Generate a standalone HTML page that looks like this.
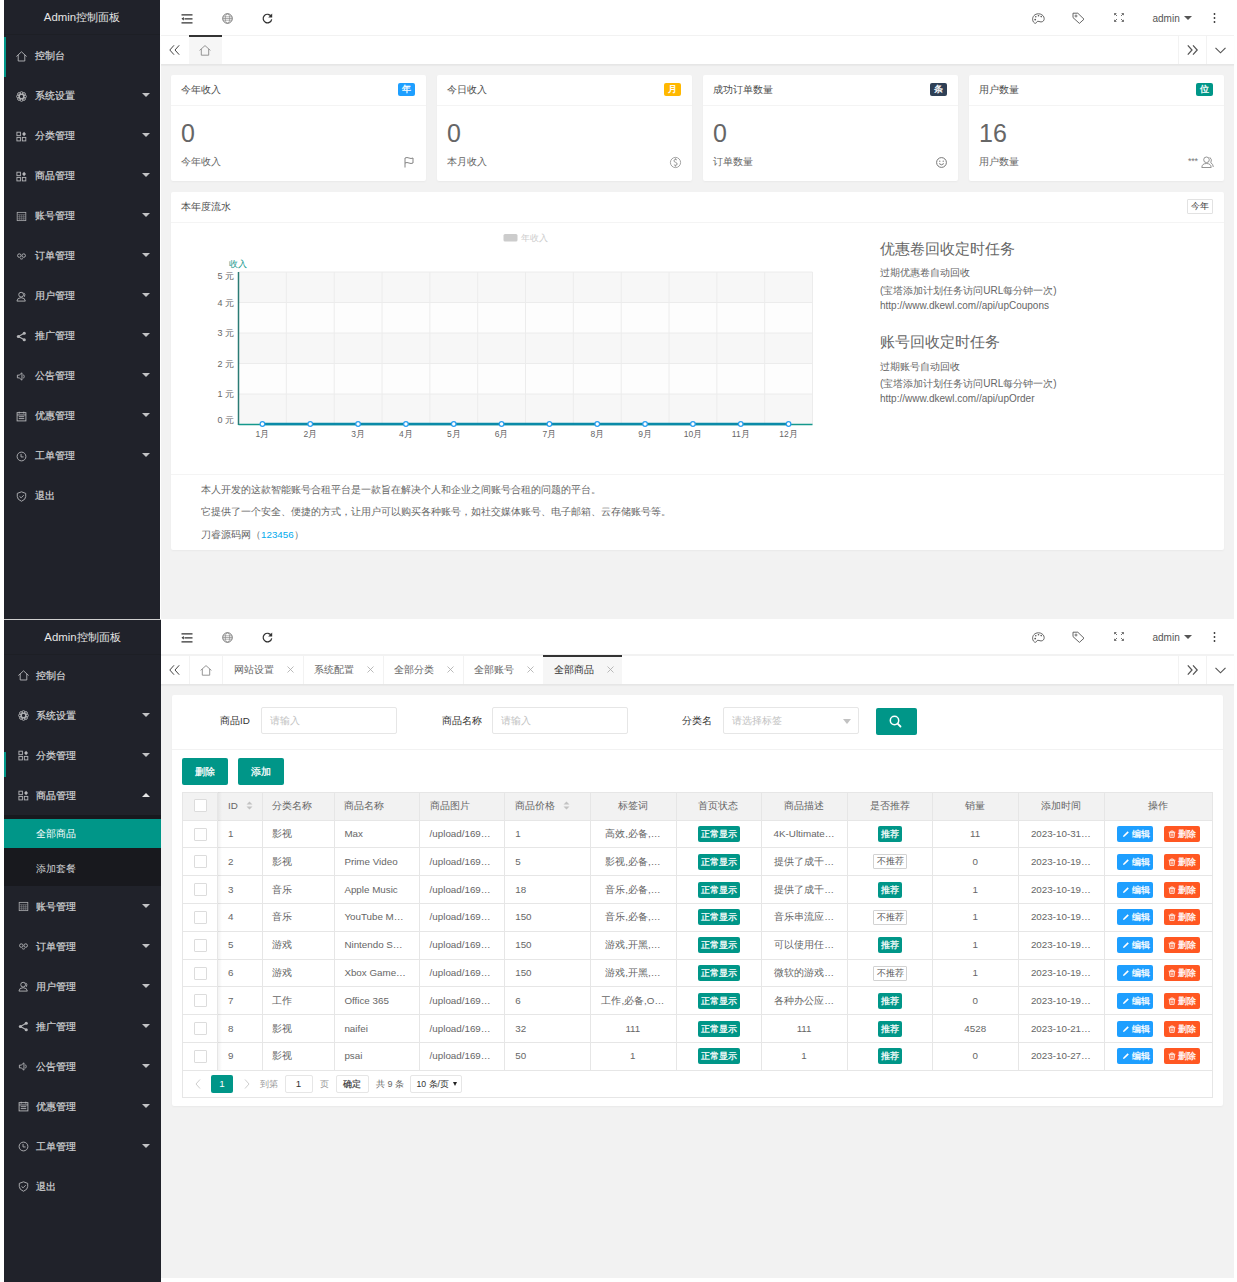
<!DOCTYPE html><html><head><meta charset="utf-8"><style>
*{box-sizing:border-box;margin:0;padding:0}
html,body{width:1237px;height:1282px;overflow:hidden;background:#fff;font-family:"Liberation Sans",sans-serif;color:#333}
.a{position:absolute}
.side{position:absolute;background:#20222a;overflow:hidden}
.logo{position:absolute;left:0;top:0;width:100%;height:35px;text-align:center;line-height:35px;font-size:11.4px;color:#e6e6e6;border-bottom:1px solid #1d1f25}
.mi{position:absolute;left:0;width:100%;height:40px;font-size:10px;color:#d2d3d5;-webkit-text-stroke:0.2px #d2d3d5}
.mi .tx{position:absolute;left:32px;top:1px;line-height:40px;white-space:nowrap}
.mi svg{position:absolute;left:13.5px;top:15px;width:11px;height:11px}
.s1 .mi .tx{left:31px;top:1px}
.s1 .mi svg{top:15.5px;left:12px}
.ar{position:absolute;left:138px;top:18px;width:0;height:0;border-left:4px solid transparent;border-right:4px solid transparent;border-top:4.5px solid #c2c3c5}
.ar.up{border-top:none;border-bottom:4.5px solid #e6e6e6;top:17.5px}
.hdr{position:absolute;background:#fff}
.grey{position:absolute;background:#f2f2f2}
.card{position:absolute;background:#fff;border-radius:2px;box-shadow:0 1px 2px rgba(0,0,0,.04)}
.ch{position:absolute;left:0;top:0;width:100%;height:31px;border-bottom:1px solid #f4f4f4;font-size:9.8px;line-height:30px;padding-left:10px;color:#4d4d4d}
.badge{position:absolute;right:11px;top:8px;height:13px;width:17px;border-radius:2px;color:#fff;font-size:8.5px;line-height:13px;text-align:center;-webkit-text-stroke:0.3px #fff}
.big{position:absolute;left:10px;top:43px;font-size:25px;color:#666;line-height:30px}
.sub{position:absolute;left:10px;top:80px;font-size:9.8px;color:#666;line-height:14px}
svg{position:absolute;overflow:visible}
.t{position:absolute;white-space:nowrap}
.tb{position:absolute;font-size:9.8px;color:#666}
.cell{position:absolute;font-size:9.8px;color:#666;white-space:nowrap;line-height:14px}
.tag{position:absolute;height:16px;line-height:16px;font-size:8.6px;color:#fff;text-align:center;border-radius:2px;-webkit-text-stroke:0.25px #fff}
</style></head><body>
<div class="grey" style="left:161px;top:0;width:1073px;height:619px"></div>
<div class="side s1" style="left:4px;top:0px;width:156px;height:619px">
<div class="logo">Admin控制面板</div>
<div class="a" style="left:0;top:37px;width:2px;height:40px;background:#009688"></div>
<div class="mi" style="top:35px"><svg viewBox="0 0 12 12" width="11" height="11"><path d="M0.4 6 L6 0.9 L11.6 6" fill="none" stroke="#b4b5b8" stroke-width="1"/><path d="M2.4 4.3 V10.9 H9.6 V4.3" fill="none" stroke="#b4b5b8" stroke-width="1"/></svg><span class="tx">控制台</span></div>
<div class="mi" style="top:75px"><svg viewBox="0 0 12 12" width="11" height="11"><circle cx="9.80" cy="6.00" r="1.55" fill="none" stroke="#b0b1b4" stroke-width="1"/><circle cx="8.69" cy="8.69" r="1.55" fill="none" stroke="#b0b1b4" stroke-width="1"/><circle cx="6.00" cy="9.80" r="1.55" fill="none" stroke="#b0b1b4" stroke-width="1"/><circle cx="3.31" cy="8.69" r="1.55" fill="none" stroke="#b0b1b4" stroke-width="1"/><circle cx="2.20" cy="6.00" r="1.55" fill="none" stroke="#b0b1b4" stroke-width="1"/><circle cx="3.31" cy="3.31" r="1.55" fill="none" stroke="#b0b1b4" stroke-width="1"/><circle cx="6.00" cy="2.20" r="1.55" fill="none" stroke="#b0b1b4" stroke-width="1"/><circle cx="8.69" cy="3.31" r="1.55" fill="none" stroke="#b0b1b4" stroke-width="1"/><circle cx="6" cy="6" r="2.6" fill="none" stroke="#b0b1b4" stroke-width="1.6"/></svg><span class="tx">系统设置</span><i class="ar"></i></div>
<div class="mi" style="top:115px"><svg viewBox="0 0 12 12" width="11" height="11"><rect x="1" y="1.3" width="3.8" height="3.8" fill="none" stroke="#b4b5b8" stroke-width="1"/><rect x="1" y="7" width="3.8" height="3.8" fill="none" stroke="#b4b5b8" stroke-width="1"/><rect x="6.9" y="7" width="3.8" height="3.8" fill="none" stroke="#b4b5b8" stroke-width="1"/><path d="M8.8 0.8 L10.9 3.2 L8.8 5.6 L6.7 3.2Z" fill="#b4b5b8"/></svg><span class="tx">分类管理</span><i class="ar"></i></div>
<div class="mi" style="top:155px"><svg viewBox="0 0 12 12" width="11" height="11"><rect x="1" y="1.3" width="3.8" height="3.8" fill="none" stroke="#b4b5b8" stroke-width="1"/><rect x="1" y="7" width="3.8" height="3.8" fill="none" stroke="#b4b5b8" stroke-width="1"/><rect x="6.9" y="7" width="3.8" height="3.8" fill="none" stroke="#b4b5b8" stroke-width="1"/><path d="M8.8 0.8 L10.9 3.2 L8.8 5.6 L6.7 3.2Z" fill="#b4b5b8"/></svg><span class="tx">商品管理</span><i class="ar"></i></div>
<div class="mi" style="top:195px"><svg viewBox="0 0 12 12" width="11" height="11"><rect x="1.3" y="1.5" width="9.4" height="9" fill="none" stroke="#a9aaad" stroke-width="0.9"/><path d="M1.3 4 H10.7 M1.3 6.3 H10.7 M1.3 8.5 H10.7 M4 4 V10.5 M6.2 4 V10.5 M8.4 4 V10.5" fill="none" stroke="#8c8d91" stroke-width="0.6"/></svg><span class="tx">账号管理</span><i class="ar"></i></div>
<div class="mi" style="top:235px"><svg viewBox="0 0 12 12" width="11" height="11"><circle cx="3.6" cy="5" r="1.9" fill="none" stroke="#b4b5b8" stroke-width="1"/><circle cx="8.4" cy="5" r="1.9" fill="none" stroke="#b4b5b8" stroke-width="1"/><path d="M4.5 8.3 Q6 9.3 7.5 8.3" fill="none" stroke="#b4b5b8" stroke-width="1"/></svg><span class="tx">订单管理</span><i class="ar"></i></div>
<div class="mi" style="top:275px"><svg viewBox="0 0 12 12" width="11" height="11"><circle cx="5.6" cy="4" r="2.6" fill="none" stroke="#b4b5b8" stroke-width="1"/><path d="M1 11 Q1.3 7.3 5.6 7.3 Q9.9 7.3 10.2 11 Z" fill="none" stroke="#b4b5b8" stroke-width="1"/><path d="M8.5 2 Q10.5 3.5 9.2 6.3" fill="none" stroke="#b4b5b8" stroke-width="1"/></svg><span class="tx">用户管理</span><i class="ar"></i></div>
<div class="mi" style="top:315px"><svg viewBox="0 0 12 12" width="11" height="11"><circle cx="2.6" cy="6" r="1.7" fill="#b4b5b8"/><circle cx="9" cy="2.5" r="1.7" fill="#b4b5b8"/><circle cx="9" cy="9.5" r="1.7" fill="#b4b5b8"/><path d="M2.6 6 L9 2.5 M2.6 6 L9 9.5" stroke="#b4b5b8" stroke-width="1.2"/></svg><span class="tx">推广管理</span><i class="ar"></i></div>
<div class="mi" style="top:355px"><svg viewBox="0 0 12 12" width="11" height="11"><path d="M1.5 4.5 H3.5 L6.5 2 V10 L3.5 7.5 H1.5 Z" fill="none" stroke="#b4b5b8" stroke-width="1"/><path d="M8.3 4 Q9.6 6 8.3 8" fill="none" stroke="#b4b5b8" stroke-width="1"/></svg><span class="tx">公告管理</span><i class="ar"></i></div>
<div class="mi" style="top:395px"><svg viewBox="0 0 12 12" width="11" height="11"><rect x="1.2" y="1.8" width="9.6" height="9" fill="none" stroke="#b4b5b8" stroke-width="1"/><path d="M3.5 0.8 V2.8 M8.5 0.8 V2.8 M1.2 4.3 H10.8 M3 6.2 H9 M3 8.3 H9" fill="none" stroke="#b4b5b8" stroke-width="1"/></svg><span class="tx">优惠管理</span><i class="ar"></i></div>
<div class="mi" style="top:435px"><svg viewBox="0 0 12 12" width="11" height="11"><circle cx="6" cy="6" r="4.8" fill="none" stroke="#b4b5b8" stroke-width="1"/><path d="M5.5 3.2 V6.5 H8.3" fill="none" stroke="#b4b5b8" stroke-width="1"/></svg><span class="tx">工单管理</span><i class="ar"></i></div>
<div class="mi" style="top:475px"><svg viewBox="0 0 12 12" width="11" height="11"><path d="M6 0.9 L10.6 2.6 V6 Q10.6 9.4 6 11.2 Q1.4 9.4 1.4 6 V2.6 Z" fill="none" stroke="#b4b5b8" stroke-width="1"/><path d="M3.8 5.8 L5.6 7.4 L8.4 4.6" fill="none" stroke="#b4b5b8" stroke-width="1"/></svg><span class="tx">退出</span></div>
</div>
<div class="hdr" style="left:161px;top:0px;width:1073px;height:35px"></div>
<svg style="left:181px;top:13.9px" width="12" height="10" viewBox="0 0 12 10"><path d="M0.5 0.8 H11.5 M3.5 4.8 H11.5 M0.5 8.8 H11.5" stroke="#333" stroke-width="1.15"/><path d="M0.5 4.8 L2.8 3.1 V6.5Z" fill="#333"/></svg>
<svg style="left:221.5px;top:13px" width="11" height="11" viewBox="0 0 11 11"><circle cx="5.5" cy="5.5" r="4.8" fill="none" stroke="#666" stroke-width="0.9"/><path d="M1.2 3.8 H9.8 M0.8 5.5 H10.2 M1.2 7.2 H9.8" fill="none" stroke="#777" stroke-width="0.6"/><ellipse cx="5.5" cy="5.5" rx="2.2" ry="4.6" fill="none" stroke="#777" stroke-width="0.6"/></svg>
<svg style="left:261.5px;top:13px" width="11" height="11" viewBox="0 0 11 11"><path d="M9.3 3.6 A4.3 4.3 0 1 0 9.7 6.3" fill="none" stroke="#333" stroke-width="1.2"/><path d="M10.2 0.6 V4.6 H6.2Z" fill="#333"/></svg>
<svg style="left:1031.5px;top:13px" width="13" height="11" viewBox="0 0 13 11"><path d="M6.5 0.8 C2.5 0.8 0.6 3.6 0.6 6.2 C0.6 8.6 2.2 10.3 3.4 10.3 C4.8 10.3 4.4 8.3 5.8 8.3 C7.6 8.3 8.4 9.4 10.3 8.7 C12.2 8 12.6 5.6 11.8 3.9 C10.9 2 9 0.8 6.5 0.8Z" fill="none" stroke="#555" stroke-width="0.9"/><circle cx="3.2" cy="6.6" r="0.9" fill="#555"/><circle cx="3.8" cy="3.8" r="0.8" fill="#555"/><circle cx="6.5" cy="2.7" r="0.8" fill="#555"/><circle cx="9.2" cy="3.6" r="0.8" fill="#555"/></svg>
<svg style="left:1071.5px;top:12px" width="13" height="12" viewBox="0 0 13 12"><path d="M1 1.2 H5.8 L12 7.2 L7.4 11.4 L1 5.6Z" fill="none" stroke="#555" stroke-width="0.9" stroke-linejoin="round"/><circle cx="4" cy="4" r="1" fill="none" stroke="#555" stroke-width="0.8"/></svg>
<svg style="left:1113.5px;top:13px" width="10" height="9" viewBox="0 0 10 9"><path d="M0.5 0.5 L3 3 M0.5 0.5 H2.4 M0.5 0.5 V2.2 M9.5 0.5 L7 3 M9.5 0.5 H7.6 M9.5 0.5 V2.2 M0.5 8.5 L3 6 M0.5 8.5 H2.4 M0.5 8.5 V6.8 M9.5 8.5 L7 6 M9.5 8.5 H7.6 M9.5 8.5 V6.8" fill="none" stroke="#666" stroke-width="0.9"/></svg>
<div class="t" style="left:1152.5px;top:12.8px;font-size:10px;color:#555;line-height:12px">admin</div>
<div class="a" style="left:1184px;top:16px;width:0;height:0;border-left:4px solid transparent;border-right:4px solid transparent;border-top:4.5px solid #555"></div>
<svg style="left:1213px;top:13px" width="3" height="10" viewBox="0 0 3 10"><circle cx="1.5" cy="1" r="0.9" fill="#333"/><circle cx="1.5" cy="5" r="0.9" fill="#333"/><circle cx="1.5" cy="9" r="0.9" fill="#333"/></svg>
<div class="hdr" style="left:161px;top:35px;width:1073px;height:29.5px;border-top:1px solid #f2f2f2;border-bottom:1px solid #e6e6e6;box-shadow:0 1px 1px rgba(0,0,0,.03)"></div>
<svg style="left:169px;top:45px" width="11" height="10" viewBox="0 0 11 10"><path d="M5 0.3 L0.8 5 L5 9.7 M10.2 0.3 L6 5 L10.2 9.7" fill="none" stroke="#444" stroke-width="1"/></svg>
<div class="a" style="left:188.5px;top:35px;width:1px;height:29px;background:#f2f2f2"></div>
<div class="a" style="left:1178px;top:35px;width:1px;height:29px;background:#f2f2f2"></div>
<div class="a" style="left:1206px;top:35px;width:1px;height:29px;background:#f2f2f2"></div>
<svg style="left:1187px;top:45px" width="11" height="10" viewBox="0 0 11 10"><path d="M0.8 0.3 L5 5 L0.8 9.7 M6 0.3 L10.2 5 L6 9.7" fill="none" stroke="#555" stroke-width="1.25"/></svg>
<svg style="left:1215px;top:47px" width="11" height="7" viewBox="0 0 11 7"><path d="M0.5 0.8 L5.5 5.8 L10.5 0.8" fill="none" stroke="#555" stroke-width="1.15"/></svg>
<div class="a" style="left:188.5px;top:35px;width:33.5px;height:29px;background:#f6f6f6;border-top:2px solid #333"></div>
<svg style="left:199.25px;top:44.5px" width="12" height="11" viewBox="0 0 12 11"><path d="M0.6 5.4 L6 0.6 L11.4 5.4 M2.3 4 V10.2 H9.7 V4" fill="none" stroke="#8a8a8a" stroke-width="0.9"/></svg>
<div class="card" style="left:171px;top:75px;width:255px;height:106px">
<div class="ch">今年收入</div><div class="badge" style="background:#1e9fff">年</div>
<div class="big">0</div><div class="sub">今年收入</div>
</div>
<div class="card" style="left:437px;top:75px;width:255px;height:106px">
<div class="ch">今日收入</div><div class="badge" style="background:#ffb800">月</div>
<div class="big">0</div><div class="sub">本月收入</div>
</div>
<div class="card" style="left:703px;top:75px;width:255px;height:106px">
<div class="ch">成功订单数量</div><div class="badge" style="background:#2f4056">条</div>
<div class="big">0</div><div class="sub">订单数量</div>
</div>
<div class="card" style="left:969px;top:75px;width:255px;height:106px">
<div class="ch">用户数量</div><div class="badge" style="background:#009688">位</div>
<div class="big">16</div><div class="sub">用户数量</div>
</div>
<svg style="left:404px;top:156.5px" width="10" height="11" viewBox="0 0 10 11"><path d="M1 10.5 V1 Q3 0 5 1 Q7 2 9 1 V6 Q7 7 5 6 Q3 5 1 6" fill="none" stroke="#777" stroke-width="0.9"/></svg>
<svg style="left:670px;top:156.5px" width="11" height="11" viewBox="0 0 11 11"><circle cx="5.5" cy="5.5" r="5.1" fill="none" stroke="#999" stroke-width="0.9"/><path d="M7 3.3 Q6.5 2.5 5.5 2.5 Q4 2.5 4 3.8 Q4 4.9 5.5 5.3 Q7.1 5.7 7.1 7 Q7.1 8.3 5.5 8.3 Q4.4 8.3 3.9 7.5 M5.5 1.3 V2.5 M5.5 8.3 V9.6" fill="none" stroke="#888" stroke-width="0.9"/></svg>
<svg style="left:936px;top:156.5px" width="11" height="11" viewBox="0 0 11 11"><circle cx="5.5" cy="5.5" r="4.9" fill="none" stroke="#666" stroke-width="0.9"/><circle cx="3.8" cy="4.2" r="0.6" fill="#666"/><circle cx="7.2" cy="4.2" r="0.6" fill="#666"/><path d="M3.2 6.6 Q5.5 9 7.8 6.6" fill="none" stroke="#666" stroke-width="0.9"/></svg>
<div class="t" style="left:1188px;top:156px;font-size:9px;color:#777;line-height:10px;letter-spacing:-0.3px">***</div>
<svg style="left:1201px;top:156px" width="13" height="12" viewBox="0 0 13 12"><circle cx="5.5" cy="3.8" r="2.8" fill="none" stroke="#888" stroke-width="0.9"/><path d="M0.8 11.5 Q1 7.5 5.5 7.5 Q10 7.5 10.2 11.5Z" fill="none" stroke="#888" stroke-width="0.9"/><path d="M8.8 1.3 Q11.5 3.5 9.8 6.8 Q12.2 8 12.3 11" fill="none" stroke="#888" stroke-width="0.9"/></svg>
<div class="card" style="left:171px;top:192px;width:1053px;height:358px">
<div class="ch">本年度流水</div>
<div class="a" style="left:1016px;top:7px;width:26px;height:15px;border:1px solid #e2e2e2;border-radius:1px;font-size:8.5px;line-height:13px;text-align:center;color:#333">今年</div>
<div class="a" style="left:0;top:282px;width:100%;height:1px;background:#f4f4f4"></div>
</div>
<svg style="left:0;top:0" width="1237" height="620" viewBox="0 0 1237 620"><rect x="238.5" y="272.0" width="574.0" height="30.5" fill="#f7f7f7"/><rect x="238.5" y="302.5" width="574.0" height="30.5" fill="#fdfdfd"/><rect x="238.5" y="333.0" width="574.0" height="30.5" fill="#f7f7f7"/><rect x="238.5" y="363.5" width="574.0" height="30.5" fill="#fdfdfd"/><rect x="238.5" y="394.0" width="574.0" height="30.5" fill="#f7f7f7"/><line x1="286.3333333333333" y1="272" x2="286.3333333333333" y2="424.5" stroke="#ececec" stroke-width="1"/><line x1="334.1666666666667" y1="272" x2="334.1666666666667" y2="424.5" stroke="#ececec" stroke-width="1"/><line x1="382.0" y1="272" x2="382.0" y2="424.5" stroke="#ececec" stroke-width="1"/><line x1="429.83333333333337" y1="272" x2="429.83333333333337" y2="424.5" stroke="#ececec" stroke-width="1"/><line x1="477.6666666666667" y1="272" x2="477.6666666666667" y2="424.5" stroke="#ececec" stroke-width="1"/><line x1="525.5" y1="272" x2="525.5" y2="424.5" stroke="#ececec" stroke-width="1"/><line x1="573.3333333333334" y1="272" x2="573.3333333333334" y2="424.5" stroke="#ececec" stroke-width="1"/><line x1="621.1666666666667" y1="272" x2="621.1666666666667" y2="424.5" stroke="#ececec" stroke-width="1"/><line x1="669.0" y1="272" x2="669.0" y2="424.5" stroke="#ececec" stroke-width="1"/><line x1="716.8333333333334" y1="272" x2="716.8333333333334" y2="424.5" stroke="#ececec" stroke-width="1"/><line x1="764.6666666666667" y1="272" x2="764.6666666666667" y2="424.5" stroke="#ececec" stroke-width="1"/><line x1="812.5" y1="272" x2="812.5" y2="424.5" stroke="#ececec" stroke-width="1"/><line x1="238.5" y1="272.0" x2="812.5" y2="272.0" stroke="#ececec" stroke-width="1"/><line x1="238.5" y1="302.5" x2="812.5" y2="302.5" stroke="#ececec" stroke-width="1"/><line x1="238.5" y1="333.0" x2="812.5" y2="333.0" stroke="#ececec" stroke-width="1"/><line x1="238.5" y1="363.5" x2="812.5" y2="363.5" stroke="#ececec" stroke-width="1"/><line x1="238.5" y1="394.0" x2="812.5" y2="394.0" stroke="#ececec" stroke-width="1"/><line x1="238.5" y1="272" x2="238.5" y2="425.0" stroke="#2a7b74" stroke-width="1.5"/><line x1="238.5" y1="424.5" x2="812.5" y2="424.5" stroke="#14988c" stroke-width="1.5"/><line x1="262.4166666666667" y1="424.0" x2="788.5833333333334" y2="424.0" stroke="#0b8aa8" stroke-width="2.4"/><circle cx="262.4166666666667" cy="424.0" r="2.3" fill="#fff" stroke="#2a9ff0" stroke-width="1.2"/><text x="262.4166666666667" y="436.5" font-size="8.5" fill="#666" text-anchor="middle" font-family="Liberation Sans">1月</text><circle cx="310.25" cy="424.0" r="2.3" fill="#fff" stroke="#2a9ff0" stroke-width="1.2"/><text x="310.25" y="436.5" font-size="8.5" fill="#666" text-anchor="middle" font-family="Liberation Sans">2月</text><circle cx="358.08333333333337" cy="424.0" r="2.3" fill="#fff" stroke="#2a9ff0" stroke-width="1.2"/><text x="358.08333333333337" y="436.5" font-size="8.5" fill="#666" text-anchor="middle" font-family="Liberation Sans">3月</text><circle cx="405.9166666666667" cy="424.0" r="2.3" fill="#fff" stroke="#2a9ff0" stroke-width="1.2"/><text x="405.9166666666667" y="436.5" font-size="8.5" fill="#666" text-anchor="middle" font-family="Liberation Sans">4月</text><circle cx="453.75" cy="424.0" r="2.3" fill="#fff" stroke="#2a9ff0" stroke-width="1.2"/><text x="453.75" y="436.5" font-size="8.5" fill="#666" text-anchor="middle" font-family="Liberation Sans">5月</text><circle cx="501.58333333333337" cy="424.0" r="2.3" fill="#fff" stroke="#2a9ff0" stroke-width="1.2"/><text x="501.58333333333337" y="436.5" font-size="8.5" fill="#666" text-anchor="middle" font-family="Liberation Sans">6月</text><circle cx="549.4166666666667" cy="424.0" r="2.3" fill="#fff" stroke="#2a9ff0" stroke-width="1.2"/><text x="549.4166666666667" y="436.5" font-size="8.5" fill="#666" text-anchor="middle" font-family="Liberation Sans">7月</text><circle cx="597.25" cy="424.0" r="2.3" fill="#fff" stroke="#2a9ff0" stroke-width="1.2"/><text x="597.25" y="436.5" font-size="8.5" fill="#666" text-anchor="middle" font-family="Liberation Sans">8月</text><circle cx="645.0833333333334" cy="424.0" r="2.3" fill="#fff" stroke="#2a9ff0" stroke-width="1.2"/><text x="645.0833333333334" y="436.5" font-size="8.5" fill="#666" text-anchor="middle" font-family="Liberation Sans">9月</text><circle cx="692.9166666666667" cy="424.0" r="2.3" fill="#fff" stroke="#2a9ff0" stroke-width="1.2"/><text x="692.9166666666667" y="436.5" font-size="8.5" fill="#666" text-anchor="middle" font-family="Liberation Sans">10月</text><circle cx="740.75" cy="424.0" r="2.3" fill="#fff" stroke="#2a9ff0" stroke-width="1.2"/><text x="740.75" y="436.5" font-size="8.5" fill="#666" text-anchor="middle" font-family="Liberation Sans">11月</text><circle cx="788.5833333333334" cy="424.0" r="2.3" fill="#fff" stroke="#2a9ff0" stroke-width="1.2"/><text x="788.5833333333334" y="436.5" font-size="8.5" fill="#666" text-anchor="middle" font-family="Liberation Sans">12月</text><text x="234" y="422.8" font-size="9" fill="#666" text-anchor="end" font-family="Liberation Sans">0 元</text><text x="234" y="397.3" font-size="9" fill="#666" text-anchor="end" font-family="Liberation Sans">1 元</text><text x="234" y="366.8" font-size="9" fill="#666" text-anchor="end" font-family="Liberation Sans">2 元</text><text x="234" y="336.3" font-size="9" fill="#666" text-anchor="end" font-family="Liberation Sans">3 元</text><text x="234" y="305.8" font-size="9" fill="#666" text-anchor="end" font-family="Liberation Sans">4 元</text><text x="234" y="279.3" font-size="9" fill="#666" text-anchor="end" font-family="Liberation Sans">5 元</text><text x="238" y="267" font-size="8.5" fill="#14988c" text-anchor="middle" font-family="Liberation Sans">收入</text><rect x="503.5" y="234" width="14" height="7.5" rx="1.5" fill="#ccc"/><text x="521" y="240.5" font-size="8.5" fill="#ccc" font-family="Liberation Sans">年收入</text></svg>
<div class="t" style="left:880px;top:239px;font-size:14.5px;color:#666;line-height:20px">优惠卷回收定时任务</div>
<div class="t" style="left:880px;top:266px;font-size:10px;color:#666;line-height:14px">过期优惠卷自动回收</div>
<div class="t" style="left:880px;top:284px;font-size:10px;color:#666;line-height:14px">(宝塔添加计划任务访问URL每分钟一次)</div>
<div class="t" style="left:880px;top:298.5px;font-size:10px;color:#666;line-height:14px">http://www.dkewl.com//api/upCoupons</div>
<div class="t" style="left:880px;top:332px;font-size:14.5px;color:#666;line-height:20px">账号回收定时任务</div>
<div class="t" style="left:880px;top:359.5px;font-size:10px;color:#666;line-height:14px">过期账号自动回收</div>
<div class="t" style="left:880px;top:377px;font-size:10px;color:#666;line-height:14px">(宝塔添加计划任务访问URL每分钟一次)</div>
<div class="t" style="left:880px;top:391.5px;font-size:10px;color:#666;line-height:14px">http://www.dkewl.com//api/upOrder</div>
<div class="t" style="left:201px;top:482.5px;font-size:9.8px;color:#666;line-height:14px">本人开发的这款智能账号合租平台是一款旨在解决个人和企业之间账号合租的问题的平台。</div>
<div class="t" style="left:201px;top:505px;font-size:9.8px;color:#666;line-height:14px">它提供了一个安全、便捷的方式，让用户可以购买各种账号，如社交媒体账号、电子邮箱、云存储账号等。</div>
<div class="t" style="left:201px;top:527.5px;font-size:9.8px;color:#666;line-height:14px">刀睿源码网（<span style="color:#01aaed">123456</span>）</div>
<div class="a" style="left:4px;top:619px;width:157px;height:1px;background:#cfcfcf"></div>
<div class="grey" style="left:161px;top:620px;width:1073px;height:658px"></div>
<div class="side " style="left:4px;top:620px;width:157px;height:662px">
<div class="logo">Admin控制面板</div>
<div class="a" style="left:0;top:132px;width:2px;height:25px;background:#009688"></div>
<div class="mi" style="top:35px"><svg viewBox="0 0 12 12" width="11" height="11"><path d="M0.4 6 L6 0.9 L11.6 6" fill="none" stroke="#b4b5b8" stroke-width="1"/><path d="M2.4 4.3 V10.9 H9.6 V4.3" fill="none" stroke="#b4b5b8" stroke-width="1"/></svg><span class="tx">控制台</span></div>
<div class="mi" style="top:75px"><svg viewBox="0 0 12 12" width="11" height="11"><circle cx="9.80" cy="6.00" r="1.55" fill="none" stroke="#b0b1b4" stroke-width="1"/><circle cx="8.69" cy="8.69" r="1.55" fill="none" stroke="#b0b1b4" stroke-width="1"/><circle cx="6.00" cy="9.80" r="1.55" fill="none" stroke="#b0b1b4" stroke-width="1"/><circle cx="3.31" cy="8.69" r="1.55" fill="none" stroke="#b0b1b4" stroke-width="1"/><circle cx="2.20" cy="6.00" r="1.55" fill="none" stroke="#b0b1b4" stroke-width="1"/><circle cx="3.31" cy="3.31" r="1.55" fill="none" stroke="#b0b1b4" stroke-width="1"/><circle cx="6.00" cy="2.20" r="1.55" fill="none" stroke="#b0b1b4" stroke-width="1"/><circle cx="8.69" cy="3.31" r="1.55" fill="none" stroke="#b0b1b4" stroke-width="1"/><circle cx="6" cy="6" r="2.6" fill="none" stroke="#b0b1b4" stroke-width="1.6"/></svg><span class="tx">系统设置</span><i class="ar"></i></div>
<div class="mi" style="top:115px"><svg viewBox="0 0 12 12" width="11" height="11"><rect x="1" y="1.3" width="3.8" height="3.8" fill="none" stroke="#b4b5b8" stroke-width="1"/><rect x="1" y="7" width="3.8" height="3.8" fill="none" stroke="#b4b5b8" stroke-width="1"/><rect x="6.9" y="7" width="3.8" height="3.8" fill="none" stroke="#b4b5b8" stroke-width="1"/><path d="M8.8 0.8 L10.9 3.2 L8.8 5.6 L6.7 3.2Z" fill="#b4b5b8"/></svg><span class="tx">分类管理</span><i class="ar"></i></div>
<div class="mi" style="top:155px"><svg viewBox="0 0 12 12" width="11" height="11"><rect x="1" y="1.3" width="3.8" height="3.8" fill="none" stroke="#b4b5b8" stroke-width="1"/><rect x="1" y="7" width="3.8" height="3.8" fill="none" stroke="#b4b5b8" stroke-width="1"/><rect x="6.9" y="7" width="3.8" height="3.8" fill="none" stroke="#b4b5b8" stroke-width="1"/><path d="M8.8 0.8 L10.9 3.2 L8.8 5.6 L6.7 3.2Z" fill="#b4b5b8"/></svg><span class="tx">商品管理</span><i class="ar up"></i></div>
<div class="a" style="left:0;top:195px;width:100%;height:71px;background:#18191e"></div>
<div class="a" style="left:0;top:199px;width:100%;height:29px;background:#009688"></div>
<div class="t" style="left:32px;top:199px;line-height:29px;font-size:10px;color:#fff">全部商品</div>
<div class="t" style="left:32px;top:234px;line-height:29px;font-size:10px;color:#cfd0d2">添加套餐</div>
<div class="mi" style="top:266px"><svg viewBox="0 0 12 12" width="11" height="11"><rect x="1.3" y="1.5" width="9.4" height="9" fill="none" stroke="#a9aaad" stroke-width="0.9"/><path d="M1.3 4 H10.7 M1.3 6.3 H10.7 M1.3 8.5 H10.7 M4 4 V10.5 M6.2 4 V10.5 M8.4 4 V10.5" fill="none" stroke="#8c8d91" stroke-width="0.6"/></svg><span class="tx">账号管理</span><i class="ar"></i></div>
<div class="mi" style="top:306px"><svg viewBox="0 0 12 12" width="11" height="11"><circle cx="3.6" cy="5" r="1.9" fill="none" stroke="#b4b5b8" stroke-width="1"/><circle cx="8.4" cy="5" r="1.9" fill="none" stroke="#b4b5b8" stroke-width="1"/><path d="M4.5 8.3 Q6 9.3 7.5 8.3" fill="none" stroke="#b4b5b8" stroke-width="1"/></svg><span class="tx">订单管理</span><i class="ar"></i></div>
<div class="mi" style="top:346px"><svg viewBox="0 0 12 12" width="11" height="11"><circle cx="5.6" cy="4" r="2.6" fill="none" stroke="#b4b5b8" stroke-width="1"/><path d="M1 11 Q1.3 7.3 5.6 7.3 Q9.9 7.3 10.2 11 Z" fill="none" stroke="#b4b5b8" stroke-width="1"/><path d="M8.5 2 Q10.5 3.5 9.2 6.3" fill="none" stroke="#b4b5b8" stroke-width="1"/></svg><span class="tx">用户管理</span><i class="ar"></i></div>
<div class="mi" style="top:386px"><svg viewBox="0 0 12 12" width="11" height="11"><circle cx="2.6" cy="6" r="1.7" fill="#b4b5b8"/><circle cx="9" cy="2.5" r="1.7" fill="#b4b5b8"/><circle cx="9" cy="9.5" r="1.7" fill="#b4b5b8"/><path d="M2.6 6 L9 2.5 M2.6 6 L9 9.5" stroke="#b4b5b8" stroke-width="1.2"/></svg><span class="tx">推广管理</span><i class="ar"></i></div>
<div class="mi" style="top:426px"><svg viewBox="0 0 12 12" width="11" height="11"><path d="M1.5 4.5 H3.5 L6.5 2 V10 L3.5 7.5 H1.5 Z" fill="none" stroke="#b4b5b8" stroke-width="1"/><path d="M8.3 4 Q9.6 6 8.3 8" fill="none" stroke="#b4b5b8" stroke-width="1"/></svg><span class="tx">公告管理</span><i class="ar"></i></div>
<div class="mi" style="top:466px"><svg viewBox="0 0 12 12" width="11" height="11"><rect x="1.2" y="1.8" width="9.6" height="9" fill="none" stroke="#b4b5b8" stroke-width="1"/><path d="M3.5 0.8 V2.8 M8.5 0.8 V2.8 M1.2 4.3 H10.8 M3 6.2 H9 M3 8.3 H9" fill="none" stroke="#b4b5b8" stroke-width="1"/></svg><span class="tx">优惠管理</span><i class="ar"></i></div>
<div class="mi" style="top:506px"><svg viewBox="0 0 12 12" width="11" height="11"><circle cx="6" cy="6" r="4.8" fill="none" stroke="#b4b5b8" stroke-width="1"/><path d="M5.5 3.2 V6.5 H8.3" fill="none" stroke="#b4b5b8" stroke-width="1"/></svg><span class="tx">工单管理</span><i class="ar"></i></div>
<div class="mi" style="top:546px"><svg viewBox="0 0 12 12" width="11" height="11"><path d="M6 0.9 L10.6 2.6 V6 Q10.6 9.4 6 11.2 Q1.4 9.4 1.4 6 V2.6 Z" fill="none" stroke="#b4b5b8" stroke-width="1"/><path d="M3.8 5.8 L5.6 7.4 L8.4 4.6" fill="none" stroke="#b4b5b8" stroke-width="1"/></svg><span class="tx">退出</span></div>
</div>
<div class="hdr" style="left:161px;top:619px;width:1073px;height:35px"></div>
<svg style="left:181px;top:632.9px" width="12" height="10" viewBox="0 0 12 10"><path d="M0.5 0.8 H11.5 M3.5 4.8 H11.5 M0.5 8.8 H11.5" stroke="#333" stroke-width="1.15"/><path d="M0.5 4.8 L2.8 3.1 V6.5Z" fill="#333"/></svg>
<svg style="left:221.5px;top:632px" width="11" height="11" viewBox="0 0 11 11"><circle cx="5.5" cy="5.5" r="4.8" fill="none" stroke="#666" stroke-width="0.9"/><path d="M1.2 3.8 H9.8 M0.8 5.5 H10.2 M1.2 7.2 H9.8" fill="none" stroke="#777" stroke-width="0.6"/><ellipse cx="5.5" cy="5.5" rx="2.2" ry="4.6" fill="none" stroke="#777" stroke-width="0.6"/></svg>
<svg style="left:261.5px;top:632px" width="11" height="11" viewBox="0 0 11 11"><path d="M9.3 3.6 A4.3 4.3 0 1 0 9.7 6.3" fill="none" stroke="#333" stroke-width="1.2"/><path d="M10.2 0.6 V4.6 H6.2Z" fill="#333"/></svg>
<svg style="left:1031.5px;top:632px" width="13" height="11" viewBox="0 0 13 11"><path d="M6.5 0.8 C2.5 0.8 0.6 3.6 0.6 6.2 C0.6 8.6 2.2 10.3 3.4 10.3 C4.8 10.3 4.4 8.3 5.8 8.3 C7.6 8.3 8.4 9.4 10.3 8.7 C12.2 8 12.6 5.6 11.8 3.9 C10.9 2 9 0.8 6.5 0.8Z" fill="none" stroke="#555" stroke-width="0.9"/><circle cx="3.2" cy="6.6" r="0.9" fill="#555"/><circle cx="3.8" cy="3.8" r="0.8" fill="#555"/><circle cx="6.5" cy="2.7" r="0.8" fill="#555"/><circle cx="9.2" cy="3.6" r="0.8" fill="#555"/></svg>
<svg style="left:1071.5px;top:631px" width="13" height="12" viewBox="0 0 13 12"><path d="M1 1.2 H5.8 L12 7.2 L7.4 11.4 L1 5.6Z" fill="none" stroke="#555" stroke-width="0.9" stroke-linejoin="round"/><circle cx="4" cy="4" r="1" fill="none" stroke="#555" stroke-width="0.8"/></svg>
<svg style="left:1113.5px;top:632px" width="10" height="9" viewBox="0 0 10 9"><path d="M0.5 0.5 L3 3 M0.5 0.5 H2.4 M0.5 0.5 V2.2 M9.5 0.5 L7 3 M9.5 0.5 H7.6 M9.5 0.5 V2.2 M0.5 8.5 L3 6 M0.5 8.5 H2.4 M0.5 8.5 V6.8 M9.5 8.5 L7 6 M9.5 8.5 H7.6 M9.5 8.5 V6.8" fill="none" stroke="#666" stroke-width="0.9"/></svg>
<div class="t" style="left:1152.5px;top:631.8px;font-size:10px;color:#555;line-height:12px">admin</div>
<div class="a" style="left:1184px;top:635px;width:0;height:0;border-left:4px solid transparent;border-right:4px solid transparent;border-top:4.5px solid #555"></div>
<svg style="left:1213px;top:632px" width="3" height="10" viewBox="0 0 3 10"><circle cx="1.5" cy="1" r="0.9" fill="#333"/><circle cx="1.5" cy="5" r="0.9" fill="#333"/><circle cx="1.5" cy="9" r="0.9" fill="#333"/></svg>
<div class="hdr" style="left:161px;top:655.3px;width:1073px;height:29.5px;border-top:1px solid #f2f2f2;border-bottom:1px solid #e6e6e6;box-shadow:0 1px 1px rgba(0,0,0,.03)"></div>
<svg style="left:169px;top:665.3px" width="11" height="10" viewBox="0 0 11 10"><path d="M5 0.3 L0.8 5 L5 9.7 M10.2 0.3 L6 5 L10.2 9.7" fill="none" stroke="#444" stroke-width="1"/></svg>
<div class="a" style="left:188.5px;top:655px;width:1px;height:29px;background:#f2f2f2"></div>
<div class="a" style="left:1178px;top:655px;width:1px;height:29px;background:#f2f2f2"></div>
<div class="a" style="left:1206px;top:655px;width:1px;height:29px;background:#f2f2f2"></div>
<svg style="left:1187px;top:665.3px" width="11" height="10" viewBox="0 0 11 10"><path d="M0.8 0.3 L5 5 L0.8 9.7 M6 0.3 L10.2 5 L6 9.7" fill="none" stroke="#555" stroke-width="1.25"/></svg>
<svg style="left:1215px;top:667px" width="11" height="7" viewBox="0 0 11 7"><path d="M0.5 0.8 L5.5 5.8 L10.5 0.8" fill="none" stroke="#555" stroke-width="1.15"/></svg>
<svg style="left:199.85000000000002px;top:664.8px" width="12" height="11" viewBox="0 0 12 11"><path d="M0.6 5.4 L6 0.6 L11.4 5.4 M2.3 4 V10.2 H9.7 V4" fill="none" stroke="#8a8a8a" stroke-width="0.9"/></svg>
<div class="a" style="left:222.3px;top:655px;width:1px;height:29px;background:#f2f2f2"></div>
<div class="t" style="left:233.60000000000002px;top:655px;font-size:10px;color:#666;line-height:29px">网站设置</div>
<svg style="left:287.0px;top:666px" width="7" height="7" viewBox="0 0 7 7"><path d="M0.5 0.5 L6.5 6.5 M6.5 0.5 L0.5 6.5" stroke="#aaa" stroke-width="0.8"/></svg>
<div class="a" style="left:302.5px;top:655px;width:1px;height:29px;background:#f2f2f2"></div>
<div class="t" style="left:313.8px;top:655px;font-size:10px;color:#666;line-height:29px">系统配置</div>
<svg style="left:367.3px;top:666px" width="7" height="7" viewBox="0 0 7 7"><path d="M0.5 0.5 L6.5 6.5 M6.5 0.5 L0.5 6.5" stroke="#aaa" stroke-width="0.8"/></svg>
<div class="a" style="left:382.8px;top:655px;width:1px;height:29px;background:#f2f2f2"></div>
<div class="t" style="left:394.1px;top:655px;font-size:10px;color:#666;line-height:29px">全部分类</div>
<svg style="left:447.1px;top:666px" width="7" height="7" viewBox="0 0 7 7"><path d="M0.5 0.5 L6.5 6.5 M6.5 0.5 L0.5 6.5" stroke="#aaa" stroke-width="0.8"/></svg>
<div class="a" style="left:462.6px;top:655px;width:1px;height:29px;background:#f2f2f2"></div>
<div class="t" style="left:473.90000000000003px;top:655px;font-size:10px;color:#666;line-height:29px">全部账号</div>
<svg style="left:527.1px;top:666px" width="7" height="7" viewBox="0 0 7 7"><path d="M0.5 0.5 L6.5 6.5 M6.5 0.5 L0.5 6.5" stroke="#aaa" stroke-width="0.8"/></svg>
<div class="a" style="left:542.6px;top:655px;width:1px;height:29px;background:#f2f2f2"></div>
<div class="a" style="left:542.6px;top:655px;width:79.60000000000002px;height:29px;background:#f6f6f6;border-top:2px solid #333"></div>
<div class="t" style="left:553.9px;top:655px;font-size:10px;color:#333;line-height:29px">全部商品</div>
<svg style="left:606.7px;top:666px" width="7" height="7" viewBox="0 0 7 7"><path d="M0.5 0.5 L6.5 6.5 M6.5 0.5 L0.5 6.5" stroke="#aaa" stroke-width="0.8"/></svg>
<div class="card" style="left:172px;top:695px;width:1051px;height:411px"></div>
<div class="a" style="left:172px;top:749px;width:1051px;height:1px;background:#f2f2f2"></div>
<div class="t" style="left:220px;top:713.5px;font-size:9.8px;color:#333;line-height:14px">商品ID</div>
<div class="a" style="left:261px;top:707px;width:135.5px;height:27px;border:1px solid #e6e6e6;border-radius:2px;background:#fff"></div>
<div class="t" style="left:269.5px;top:713.5px;font-size:9.8px;color:#c2c2c2;line-height:14px">请输入</div>
<div class="t" style="left:441.5px;top:713.5px;font-size:9.8px;color:#333;line-height:14px">商品名称</div>
<div class="a" style="left:492px;top:707px;width:135.5px;height:27px;border:1px solid #e6e6e6;border-radius:2px;background:#fff"></div>
<div class="t" style="left:500.5px;top:713.5px;font-size:9.8px;color:#c2c2c2;line-height:14px">请输入</div>
<div class="t" style="left:682px;top:713.5px;font-size:9.8px;color:#333;line-height:14px">分类名</div>
<div class="a" style="left:723px;top:707px;width:135.5px;height:27px;border:1px solid #e6e6e6;border-radius:2px;background:#fff"></div>
<div class="t" style="left:731.5px;top:713.5px;font-size:9.8px;color:#c2c2c2;line-height:14px">请选择标签</div>
<div class="a" style="left:842.5px;top:719px;width:0;height:0;border-left:4.5px solid transparent;border-right:4.5px solid transparent;border-top:5px solid #c2c2c2"></div>
<div class="a" style="left:876px;top:707.5px;width:40.5px;height:27px;background:#009688;border-radius:2px"></div>
<svg style="left:889px;top:714.5px" width="13" height="13" viewBox="0 0 13 13"><circle cx="5.5" cy="5.5" r="4.2" fill="none" stroke="#fff" stroke-width="1.5"/><path d="M8.6 8.6 L11.5 11.5" stroke="#fff" stroke-width="1.8" stroke-linecap="round"/></svg>
<div class="a" style="left:182px;top:757.5px;width:46px;height:27px;background:#009688;border-radius:2px;color:#fff;font-size:9.8px;line-height:27px;text-align:center;-webkit-text-stroke:0.25px #fff">删除</div>
<div class="a" style="left:238px;top:757.5px;width:45.5px;height:27px;background:#009688;border-radius:2px;color:#fff;font-size:9.8px;line-height:27px;text-align:center;-webkit-text-stroke:0.25px #fff">添加</div>
<div class="a" style="left:182.4px;top:791.8px;width:1030.0px;height:27.8px;background:#f2f2f2"></div>
<div class="a" style="left:182.4px;top:791.8px;width:1030.6px;height:306.5px;border:1px solid #e6e6e6"></div>
<div class="a" style="left:217.2px;top:791.8px;width:1px;height:278.0px;background:#e6e6e6"></div>
<div class="a" style="left:261.6px;top:791.8px;width:1px;height:278.0px;background:#e6e6e6"></div>
<div class="a" style="left:333.6px;top:791.8px;width:1px;height:278.0px;background:#e6e6e6"></div>
<div class="a" style="left:418.8px;top:791.8px;width:1px;height:278.0px;background:#e6e6e6"></div>
<div class="a" style="left:504.4px;top:791.8px;width:1px;height:278.0px;background:#e6e6e6"></div>
<div class="a" style="left:590.2px;top:791.8px;width:1px;height:278.0px;background:#e6e6e6"></div>
<div class="a" style="left:675.5px;top:791.8px;width:1px;height:278.0px;background:#e6e6e6"></div>
<div class="a" style="left:761.3px;top:791.8px;width:1px;height:278.0px;background:#e6e6e6"></div>
<div class="a" style="left:846.9px;top:791.8px;width:1px;height:278.0px;background:#e6e6e6"></div>
<div class="a" style="left:932.2px;top:791.8px;width:1px;height:278.0px;background:#e6e6e6"></div>
<div class="a" style="left:1018.2px;top:791.8px;width:1px;height:278.0px;background:#e6e6e6"></div>
<div class="a" style="left:1103.6px;top:791.8px;width:1px;height:278.0px;background:#e6e6e6"></div>
<div class="a" style="left:182.4px;top:819.5999999999999px;width:1030.0px;height:1px;background:#e6e6e6"></div>
<div class="a" style="left:182.4px;top:847.3999999999999px;width:1030.0px;height:1px;background:#e6e6e6"></div>
<div class="a" style="left:182.4px;top:875.1999999999999px;width:1030.0px;height:1px;background:#e6e6e6"></div>
<div class="a" style="left:182.4px;top:902.9999999999999px;width:1030.0px;height:1px;background:#e6e6e6"></div>
<div class="a" style="left:182.4px;top:930.8px;width:1030.0px;height:1px;background:#e6e6e6"></div>
<div class="a" style="left:182.4px;top:958.5999999999999px;width:1030.0px;height:1px;background:#e6e6e6"></div>
<div class="a" style="left:182.4px;top:986.3999999999999px;width:1030.0px;height:1px;background:#e6e6e6"></div>
<div class="a" style="left:182.4px;top:1014.1999999999999px;width:1030.0px;height:1px;background:#e6e6e6"></div>
<div class="a" style="left:182.4px;top:1042.0px;width:1030.0px;height:1px;background:#e6e6e6"></div>
<div class="a" style="left:182.4px;top:1069.8px;width:1030.0px;height:1px;background:#e6e6e6"></div>
<div class="a" style="left:218.2px;top:791.8px;width:4px;height:278.0px;background:linear-gradient(to right,rgba(0,0,0,.05),rgba(0,0,0,0))"></div>
<div class="a" style="left:193.5px;top:799.1999999999999px;width:13px;height:13px;border:1px solid #dcdcdc;border-radius:1px;background:#fff"></div>
<div class="cell" style="left:228.0px;top:798.6999999999999px;color:#666">ID</div>
<div class="cell" style="left:272.40000000000003px;top:798.6999999999999px;color:#666">分类名称</div>
<div class="cell" style="left:344.40000000000003px;top:798.6999999999999px;color:#666">商品名称</div>
<div class="cell" style="left:429.6px;top:798.6999999999999px;color:#666">商品图片</div>
<div class="cell" style="left:515.1999999999999px;top:798.6999999999999px;color:#666">商品价格</div>
<div class="cell" style="left:590.2px;top:798.6999999999999px;width:85.29999999999995px;text-align:center;color:#666">标签词</div>
<div class="cell" style="left:675.5px;top:798.6999999999999px;width:85.79999999999995px;text-align:center;color:#666">首页状态</div>
<div class="cell" style="left:761.3px;top:798.6999999999999px;width:85.60000000000002px;text-align:center;color:#666">商品描述</div>
<div class="cell" style="left:846.9px;top:798.6999999999999px;width:85.30000000000007px;text-align:center;color:#666">是否推荐</div>
<div class="cell" style="left:932.2px;top:798.6999999999999px;width:86.0px;text-align:center;color:#666">销量</div>
<div class="cell" style="left:1018.2px;top:798.6999999999999px;width:85.39999999999986px;text-align:center;color:#666">添加时间</div>
<div class="cell" style="left:1103.6px;top:798.6999999999999px;width:108.80000000000018px;text-align:center;color:#666">操作</div>
<svg style="left:245.7px;top:801.1999999999999px" width="7" height="9" viewBox="0 0 7 9"><path d="M3.5 0.5 L6.5 3.6 H0.5Z M3.5 8.5 L6.5 5.4 H0.5Z" fill="#c2c2c2"/></svg>
<svg style="left:562.9px;top:801.1999999999999px" width="7" height="9" viewBox="0 0 7 9"><path d="M3.5 0.5 L6.5 3.6 H0.5Z M3.5 8.5 L6.5 5.4 H0.5Z" fill="#c2c2c2"/></svg>
<div class="a" style="left:193.5px;top:827.4999999999999px;width:13px;height:13px;border:1px solid #dcdcdc;border-radius:1px;background:#fff"></div>
<div class="cell" style="left:228.0px;top:826.9999999999999px;color:#666">1</div>
<div class="cell" style="left:272.40000000000003px;top:826.9999999999999px;color:#666">影视</div>
<div class="cell" style="left:344.40000000000003px;top:826.9999999999999px;color:#666">Max</div>
<div class="cell" style="left:429.6px;top:826.9999999999999px;color:#666">/upload/169…</div>
<div class="cell" style="left:515.1999999999999px;top:826.9999999999999px;color:#666">1</div>
<div class="cell" style="left:590.2px;top:826.9999999999999px;width:85.29999999999995px;text-align:center;color:#666">高效,必备,…</div>
<div class="cell" style="left:761.3px;top:826.9999999999999px;width:85.60000000000002px;text-align:center;color:#666">4K-Ultimate…</div>
<div class="cell" style="left:932.2px;top:826.9999999999999px;width:86.0px;text-align:center;color:#666">11</div>
<div class="cell" style="left:1018.2px;top:826.9999999999999px;width:85.39999999999986px;text-align:center;color:#666">2023-10-31…</div>
<div class="tag" style="left:698px;top:825.9999999999999px;width:41.5px;background:#009688">正常显示</div>
<div class="tag" style="left:878px;top:825.9999999999999px;width:24px;background:#009688">推荐</div>
<div class="tag" style="left:1117.2px;top:825.9999999999999px;width:35.8px;background:#1e9fff;border-radius:2px;padding-left:11.5px">编辑</div>
<svg style="left:1121.5px;top:829.9999999999999px" width="8" height="8" viewBox="0 0 8 8"><path d="M1 7 L1.4 5.4 L5.6 1.2 L6.8 2.4 L2.6 6.6Z" fill="#fff"/></svg>
<div class="tag" style="left:1163.6px;top:825.9999999999999px;width:36px;background:#ff5722;border-radius:2px;padding-left:11.5px">删除</div>
<svg style="left:1167.5px;top:829.9999999999999px" width="8" height="8" viewBox="0 0 8 8"><path d="M0.6 2.2 H7.4 M2.8 2.2 V1 H5.2 V2.2 M1.5 2.8 H6.5 L6.1 7.4 H1.9 Z M3.2 3.8 V6.4 M4.8 3.8 V6.4" fill="none" stroke="#fff" stroke-width="0.8"/></svg>
<div class="a" style="left:193.5px;top:855.2999999999998px;width:13px;height:13px;border:1px solid #dcdcdc;border-radius:1px;background:#fff"></div>
<div class="cell" style="left:228.0px;top:854.7999999999998px;color:#666">2</div>
<div class="cell" style="left:272.40000000000003px;top:854.7999999999998px;color:#666">影视</div>
<div class="cell" style="left:344.40000000000003px;top:854.7999999999998px;color:#666">Prime Video</div>
<div class="cell" style="left:429.6px;top:854.7999999999998px;color:#666">/upload/169…</div>
<div class="cell" style="left:515.1999999999999px;top:854.7999999999998px;color:#666">5</div>
<div class="cell" style="left:590.2px;top:854.7999999999998px;width:85.29999999999995px;text-align:center;color:#666">影视,必备,…</div>
<div class="cell" style="left:761.3px;top:854.7999999999998px;width:85.60000000000002px;text-align:center;color:#666">提供了成千…</div>
<div class="cell" style="left:932.2px;top:854.7999999999998px;width:86.0px;text-align:center;color:#666">0</div>
<div class="cell" style="left:1018.2px;top:854.7999999999998px;width:85.39999999999986px;text-align:center;color:#666">2023-10-19…</div>
<div class="tag" style="left:698px;top:853.7999999999998px;width:41.5px;background:#009688">正常显示</div>
<div class="tag" style="left:873.2px;top:854.2999999999998px;width:33.8px;background:#fff;border:1px solid #d2d2d2;color:#555;line-height:13px;height:15px;-webkit-text-stroke:0;border-radius:1px">不推荐</div>
<div class="tag" style="left:1117.2px;top:853.7999999999998px;width:35.8px;background:#1e9fff;border-radius:2px;padding-left:11.5px">编辑</div>
<svg style="left:1121.5px;top:857.7999999999998px" width="8" height="8" viewBox="0 0 8 8"><path d="M1 7 L1.4 5.4 L5.6 1.2 L6.8 2.4 L2.6 6.6Z" fill="#fff"/></svg>
<div class="tag" style="left:1163.6px;top:853.7999999999998px;width:36px;background:#ff5722;border-radius:2px;padding-left:11.5px">删除</div>
<svg style="left:1167.5px;top:857.7999999999998px" width="8" height="8" viewBox="0 0 8 8"><path d="M0.6 2.2 H7.4 M2.8 2.2 V1 H5.2 V2.2 M1.5 2.8 H6.5 L6.1 7.4 H1.9 Z M3.2 3.8 V6.4 M4.8 3.8 V6.4" fill="none" stroke="#fff" stroke-width="0.8"/></svg>
<div class="a" style="left:193.5px;top:883.0999999999999px;width:13px;height:13px;border:1px solid #dcdcdc;border-radius:1px;background:#fff"></div>
<div class="cell" style="left:228.0px;top:882.5999999999999px;color:#666">3</div>
<div class="cell" style="left:272.40000000000003px;top:882.5999999999999px;color:#666">音乐</div>
<div class="cell" style="left:344.40000000000003px;top:882.5999999999999px;color:#666">Apple Music</div>
<div class="cell" style="left:429.6px;top:882.5999999999999px;color:#666">/upload/169…</div>
<div class="cell" style="left:515.1999999999999px;top:882.5999999999999px;color:#666">18</div>
<div class="cell" style="left:590.2px;top:882.5999999999999px;width:85.29999999999995px;text-align:center;color:#666">音乐,必备,…</div>
<div class="cell" style="left:761.3px;top:882.5999999999999px;width:85.60000000000002px;text-align:center;color:#666">提供了成千…</div>
<div class="cell" style="left:932.2px;top:882.5999999999999px;width:86.0px;text-align:center;color:#666">1</div>
<div class="cell" style="left:1018.2px;top:882.5999999999999px;width:85.39999999999986px;text-align:center;color:#666">2023-10-19…</div>
<div class="tag" style="left:698px;top:881.5999999999999px;width:41.5px;background:#009688">正常显示</div>
<div class="tag" style="left:878px;top:881.5999999999999px;width:24px;background:#009688">推荐</div>
<div class="tag" style="left:1117.2px;top:881.5999999999999px;width:35.8px;background:#1e9fff;border-radius:2px;padding-left:11.5px">编辑</div>
<svg style="left:1121.5px;top:885.5999999999999px" width="8" height="8" viewBox="0 0 8 8"><path d="M1 7 L1.4 5.4 L5.6 1.2 L6.8 2.4 L2.6 6.6Z" fill="#fff"/></svg>
<div class="tag" style="left:1163.6px;top:881.5999999999999px;width:36px;background:#ff5722;border-radius:2px;padding-left:11.5px">删除</div>
<svg style="left:1167.5px;top:885.5999999999999px" width="8" height="8" viewBox="0 0 8 8"><path d="M0.6 2.2 H7.4 M2.8 2.2 V1 H5.2 V2.2 M1.5 2.8 H6.5 L6.1 7.4 H1.9 Z M3.2 3.8 V6.4 M4.8 3.8 V6.4" fill="none" stroke="#fff" stroke-width="0.8"/></svg>
<div class="a" style="left:193.5px;top:910.8999999999999px;width:13px;height:13px;border:1px solid #dcdcdc;border-radius:1px;background:#fff"></div>
<div class="cell" style="left:228.0px;top:910.3999999999999px;color:#666">4</div>
<div class="cell" style="left:272.40000000000003px;top:910.3999999999999px;color:#666">音乐</div>
<div class="cell" style="left:344.40000000000003px;top:910.3999999999999px;color:#666">YouTube M…</div>
<div class="cell" style="left:429.6px;top:910.3999999999999px;color:#666">/upload/169…</div>
<div class="cell" style="left:515.1999999999999px;top:910.3999999999999px;color:#666">150</div>
<div class="cell" style="left:590.2px;top:910.3999999999999px;width:85.29999999999995px;text-align:center;color:#666">音乐,必备,…</div>
<div class="cell" style="left:761.3px;top:910.3999999999999px;width:85.60000000000002px;text-align:center;color:#666">音乐串流应…</div>
<div class="cell" style="left:932.2px;top:910.3999999999999px;width:86.0px;text-align:center;color:#666">1</div>
<div class="cell" style="left:1018.2px;top:910.3999999999999px;width:85.39999999999986px;text-align:center;color:#666">2023-10-19…</div>
<div class="tag" style="left:698px;top:909.3999999999999px;width:41.5px;background:#009688">正常显示</div>
<div class="tag" style="left:873.2px;top:909.8999999999999px;width:33.8px;background:#fff;border:1px solid #d2d2d2;color:#555;line-height:13px;height:15px;-webkit-text-stroke:0;border-radius:1px">不推荐</div>
<div class="tag" style="left:1117.2px;top:909.3999999999999px;width:35.8px;background:#1e9fff;border-radius:2px;padding-left:11.5px">编辑</div>
<svg style="left:1121.5px;top:913.3999999999999px" width="8" height="8" viewBox="0 0 8 8"><path d="M1 7 L1.4 5.4 L5.6 1.2 L6.8 2.4 L2.6 6.6Z" fill="#fff"/></svg>
<div class="tag" style="left:1163.6px;top:909.3999999999999px;width:36px;background:#ff5722;border-radius:2px;padding-left:11.5px">删除</div>
<svg style="left:1167.5px;top:913.3999999999999px" width="8" height="8" viewBox="0 0 8 8"><path d="M0.6 2.2 H7.4 M2.8 2.2 V1 H5.2 V2.2 M1.5 2.8 H6.5 L6.1 7.4 H1.9 Z M3.2 3.8 V6.4 M4.8 3.8 V6.4" fill="none" stroke="#fff" stroke-width="0.8"/></svg>
<div class="a" style="left:193.5px;top:938.6999999999999px;width:13px;height:13px;border:1px solid #dcdcdc;border-radius:1px;background:#fff"></div>
<div class="cell" style="left:228.0px;top:938.1999999999999px;color:#666">5</div>
<div class="cell" style="left:272.40000000000003px;top:938.1999999999999px;color:#666">游戏</div>
<div class="cell" style="left:344.40000000000003px;top:938.1999999999999px;color:#666">Nintendo S…</div>
<div class="cell" style="left:429.6px;top:938.1999999999999px;color:#666">/upload/169…</div>
<div class="cell" style="left:515.1999999999999px;top:938.1999999999999px;color:#666">150</div>
<div class="cell" style="left:590.2px;top:938.1999999999999px;width:85.29999999999995px;text-align:center;color:#666">游戏,开黑,…</div>
<div class="cell" style="left:761.3px;top:938.1999999999999px;width:85.60000000000002px;text-align:center;color:#666">可以使用任…</div>
<div class="cell" style="left:932.2px;top:938.1999999999999px;width:86.0px;text-align:center;color:#666">1</div>
<div class="cell" style="left:1018.2px;top:938.1999999999999px;width:85.39999999999986px;text-align:center;color:#666">2023-10-19…</div>
<div class="tag" style="left:698px;top:937.1999999999999px;width:41.5px;background:#009688">正常显示</div>
<div class="tag" style="left:878px;top:937.1999999999999px;width:24px;background:#009688">推荐</div>
<div class="tag" style="left:1117.2px;top:937.1999999999999px;width:35.8px;background:#1e9fff;border-radius:2px;padding-left:11.5px">编辑</div>
<svg style="left:1121.5px;top:941.1999999999999px" width="8" height="8" viewBox="0 0 8 8"><path d="M1 7 L1.4 5.4 L5.6 1.2 L6.8 2.4 L2.6 6.6Z" fill="#fff"/></svg>
<div class="tag" style="left:1163.6px;top:937.1999999999999px;width:36px;background:#ff5722;border-radius:2px;padding-left:11.5px">删除</div>
<svg style="left:1167.5px;top:941.1999999999999px" width="8" height="8" viewBox="0 0 8 8"><path d="M0.6 2.2 H7.4 M2.8 2.2 V1 H5.2 V2.2 M1.5 2.8 H6.5 L6.1 7.4 H1.9 Z M3.2 3.8 V6.4 M4.8 3.8 V6.4" fill="none" stroke="#fff" stroke-width="0.8"/></svg>
<div class="a" style="left:193.5px;top:966.4999999999999px;width:13px;height:13px;border:1px solid #dcdcdc;border-radius:1px;background:#fff"></div>
<div class="cell" style="left:228.0px;top:965.9999999999999px;color:#666">6</div>
<div class="cell" style="left:272.40000000000003px;top:965.9999999999999px;color:#666">游戏</div>
<div class="cell" style="left:344.40000000000003px;top:965.9999999999999px;color:#666">Xbox Game…</div>
<div class="cell" style="left:429.6px;top:965.9999999999999px;color:#666">/upload/169…</div>
<div class="cell" style="left:515.1999999999999px;top:965.9999999999999px;color:#666">150</div>
<div class="cell" style="left:590.2px;top:965.9999999999999px;width:85.29999999999995px;text-align:center;color:#666">游戏,开黑,…</div>
<div class="cell" style="left:761.3px;top:965.9999999999999px;width:85.60000000000002px;text-align:center;color:#666">微软的游戏…</div>
<div class="cell" style="left:932.2px;top:965.9999999999999px;width:86.0px;text-align:center;color:#666">1</div>
<div class="cell" style="left:1018.2px;top:965.9999999999999px;width:85.39999999999986px;text-align:center;color:#666">2023-10-19…</div>
<div class="tag" style="left:698px;top:964.9999999999999px;width:41.5px;background:#009688">正常显示</div>
<div class="tag" style="left:873.2px;top:965.4999999999999px;width:33.8px;background:#fff;border:1px solid #d2d2d2;color:#555;line-height:13px;height:15px;-webkit-text-stroke:0;border-radius:1px">不推荐</div>
<div class="tag" style="left:1117.2px;top:964.9999999999999px;width:35.8px;background:#1e9fff;border-radius:2px;padding-left:11.5px">编辑</div>
<svg style="left:1121.5px;top:968.9999999999999px" width="8" height="8" viewBox="0 0 8 8"><path d="M1 7 L1.4 5.4 L5.6 1.2 L6.8 2.4 L2.6 6.6Z" fill="#fff"/></svg>
<div class="tag" style="left:1163.6px;top:964.9999999999999px;width:36px;background:#ff5722;border-radius:2px;padding-left:11.5px">删除</div>
<svg style="left:1167.5px;top:968.9999999999999px" width="8" height="8" viewBox="0 0 8 8"><path d="M0.6 2.2 H7.4 M2.8 2.2 V1 H5.2 V2.2 M1.5 2.8 H6.5 L6.1 7.4 H1.9 Z M3.2 3.8 V6.4 M4.8 3.8 V6.4" fill="none" stroke="#fff" stroke-width="0.8"/></svg>
<div class="a" style="left:193.5px;top:994.2999999999998px;width:13px;height:13px;border:1px solid #dcdcdc;border-radius:1px;background:#fff"></div>
<div class="cell" style="left:228.0px;top:993.7999999999998px;color:#666">7</div>
<div class="cell" style="left:272.40000000000003px;top:993.7999999999998px;color:#666">工作</div>
<div class="cell" style="left:344.40000000000003px;top:993.7999999999998px;color:#666">Office 365</div>
<div class="cell" style="left:429.6px;top:993.7999999999998px;color:#666">/upload/169…</div>
<div class="cell" style="left:515.1999999999999px;top:993.7999999999998px;color:#666">6</div>
<div class="cell" style="left:590.2px;top:993.7999999999998px;width:85.29999999999995px;text-align:center;color:#666">工作,必备,O…</div>
<div class="cell" style="left:761.3px;top:993.7999999999998px;width:85.60000000000002px;text-align:center;color:#666">各种办公应…</div>
<div class="cell" style="left:932.2px;top:993.7999999999998px;width:86.0px;text-align:center;color:#666">0</div>
<div class="cell" style="left:1018.2px;top:993.7999999999998px;width:85.39999999999986px;text-align:center;color:#666">2023-10-19…</div>
<div class="tag" style="left:698px;top:992.7999999999998px;width:41.5px;background:#009688">正常显示</div>
<div class="tag" style="left:878px;top:992.7999999999998px;width:24px;background:#009688">推荐</div>
<div class="tag" style="left:1117.2px;top:992.7999999999998px;width:35.8px;background:#1e9fff;border-radius:2px;padding-left:11.5px">编辑</div>
<svg style="left:1121.5px;top:996.7999999999998px" width="8" height="8" viewBox="0 0 8 8"><path d="M1 7 L1.4 5.4 L5.6 1.2 L6.8 2.4 L2.6 6.6Z" fill="#fff"/></svg>
<div class="tag" style="left:1163.6px;top:992.7999999999998px;width:36px;background:#ff5722;border-radius:2px;padding-left:11.5px">删除</div>
<svg style="left:1167.5px;top:996.7999999999998px" width="8" height="8" viewBox="0 0 8 8"><path d="M0.6 2.2 H7.4 M2.8 2.2 V1 H5.2 V2.2 M1.5 2.8 H6.5 L6.1 7.4 H1.9 Z M3.2 3.8 V6.4 M4.8 3.8 V6.4" fill="none" stroke="#fff" stroke-width="0.8"/></svg>
<div class="a" style="left:193.5px;top:1022.0999999999999px;width:13px;height:13px;border:1px solid #dcdcdc;border-radius:1px;background:#fff"></div>
<div class="cell" style="left:228.0px;top:1021.5999999999999px;color:#666">8</div>
<div class="cell" style="left:272.40000000000003px;top:1021.5999999999999px;color:#666">影视</div>
<div class="cell" style="left:344.40000000000003px;top:1021.5999999999999px;color:#666">naifei</div>
<div class="cell" style="left:429.6px;top:1021.5999999999999px;color:#666">/upload/169…</div>
<div class="cell" style="left:515.1999999999999px;top:1021.5999999999999px;color:#666">32</div>
<div class="cell" style="left:590.2px;top:1021.5999999999999px;width:85.29999999999995px;text-align:center;color:#666">111</div>
<div class="cell" style="left:761.3px;top:1021.5999999999999px;width:85.60000000000002px;text-align:center;color:#666">111</div>
<div class="cell" style="left:932.2px;top:1021.5999999999999px;width:86.0px;text-align:center;color:#666">4528</div>
<div class="cell" style="left:1018.2px;top:1021.5999999999999px;width:85.39999999999986px;text-align:center;color:#666">2023-10-21…</div>
<div class="tag" style="left:698px;top:1020.5999999999999px;width:41.5px;background:#009688">正常显示</div>
<div class="tag" style="left:878px;top:1020.5999999999999px;width:24px;background:#009688">推荐</div>
<div class="tag" style="left:1117.2px;top:1020.5999999999999px;width:35.8px;background:#1e9fff;border-radius:2px;padding-left:11.5px">编辑</div>
<svg style="left:1121.5px;top:1024.6px" width="8" height="8" viewBox="0 0 8 8"><path d="M1 7 L1.4 5.4 L5.6 1.2 L6.8 2.4 L2.6 6.6Z" fill="#fff"/></svg>
<div class="tag" style="left:1163.6px;top:1020.5999999999999px;width:36px;background:#ff5722;border-radius:2px;padding-left:11.5px">删除</div>
<svg style="left:1167.5px;top:1024.6px" width="8" height="8" viewBox="0 0 8 8"><path d="M0.6 2.2 H7.4 M2.8 2.2 V1 H5.2 V2.2 M1.5 2.8 H6.5 L6.1 7.4 H1.9 Z M3.2 3.8 V6.4 M4.8 3.8 V6.4" fill="none" stroke="#fff" stroke-width="0.8"/></svg>
<div class="a" style="left:193.5px;top:1049.9px;width:13px;height:13px;border:1px solid #dcdcdc;border-radius:1px;background:#fff"></div>
<div class="cell" style="left:228.0px;top:1049.4px;color:#666">9</div>
<div class="cell" style="left:272.40000000000003px;top:1049.4px;color:#666">影视</div>
<div class="cell" style="left:344.40000000000003px;top:1049.4px;color:#666">psai</div>
<div class="cell" style="left:429.6px;top:1049.4px;color:#666">/upload/169…</div>
<div class="cell" style="left:515.1999999999999px;top:1049.4px;color:#666">50</div>
<div class="cell" style="left:590.2px;top:1049.4px;width:85.29999999999995px;text-align:center;color:#666">1</div>
<div class="cell" style="left:761.3px;top:1049.4px;width:85.60000000000002px;text-align:center;color:#666">1</div>
<div class="cell" style="left:932.2px;top:1049.4px;width:86.0px;text-align:center;color:#666">0</div>
<div class="cell" style="left:1018.2px;top:1049.4px;width:85.39999999999986px;text-align:center;color:#666">2023-10-27…</div>
<div class="tag" style="left:698px;top:1048.4px;width:41.5px;background:#009688">正常显示</div>
<div class="tag" style="left:878px;top:1048.4px;width:24px;background:#009688">推荐</div>
<div class="tag" style="left:1117.2px;top:1048.4px;width:35.8px;background:#1e9fff;border-radius:2px;padding-left:11.5px">编辑</div>
<svg style="left:1121.5px;top:1052.4px" width="8" height="8" viewBox="0 0 8 8"><path d="M1 7 L1.4 5.4 L5.6 1.2 L6.8 2.4 L2.6 6.6Z" fill="#fff"/></svg>
<div class="tag" style="left:1163.6px;top:1048.4px;width:36px;background:#ff5722;border-radius:2px;padding-left:11.5px">删除</div>
<svg style="left:1167.5px;top:1052.4px" width="8" height="8" viewBox="0 0 8 8"><path d="M0.6 2.2 H7.4 M2.8 2.2 V1 H5.2 V2.2 M1.5 2.8 H6.5 L6.1 7.4 H1.9 Z M3.2 3.8 V6.4 M4.8 3.8 V6.4" fill="none" stroke="#fff" stroke-width="0.8"/></svg>
<svg style="left:194.5px;top:1078.8px" width="6" height="10" viewBox="0 0 6 10"><path d="M5 0.5 L1 5 L5 9.5" fill="none" stroke="#c8c8c8" stroke-width="0.9"/></svg>
<div class="a" style="left:211px;top:1074.6px;width:22px;height:18.5px;background:#009688;border-radius:2px;color:#fff;font-size:9.8px;line-height:18.5px;text-align:center">1</div>
<svg style="left:243.5px;top:1078.8px" width="6" height="10" viewBox="0 0 6 10"><path d="M1 0.5 L5 5 L1 9.5" fill="none" stroke="#c8c8c8" stroke-width="0.9"/></svg>
<div class="cell" style="left:260px;top:1076.8px;font-size:9px;color:#999">到第</div>
<div class="a" style="left:284.5px;top:1074.6px;width:28px;height:18.5px;border:1px solid #e6e6e6;border-radius:2px;font-size:9.8px;line-height:16.5px;text-align:center;color:#333">1</div>
<div class="cell" style="left:319.5px;top:1076.8px;font-size:9px;color:#999">页</div>
<div class="a" style="left:336px;top:1074.6px;width:32.5px;height:18.5px;border:1px solid #e6e6e6;border-radius:2px;font-size:9px;line-height:16.5px;text-align:center;color:#333;-webkit-text-stroke:0.15px #333">确定</div>
<div class="cell" style="left:376px;top:1076.8px;font-size:9px;color:#666">共 9 条</div>
<div class="a" style="left:409.5px;top:1074.6px;width:52px;height:18.5px;border:1px solid #e6e6e6;border-radius:2px;font-size:8.7px;line-height:16.5px;padding-left:6px;color:#333">10 条/页</div>
<div class="a" style="left:453px;top:1081.8px;width:0;height:0;border-left:2.5px solid transparent;border-right:2.5px solid transparent;border-top:4.5px solid #222"></div>
</body></html>
